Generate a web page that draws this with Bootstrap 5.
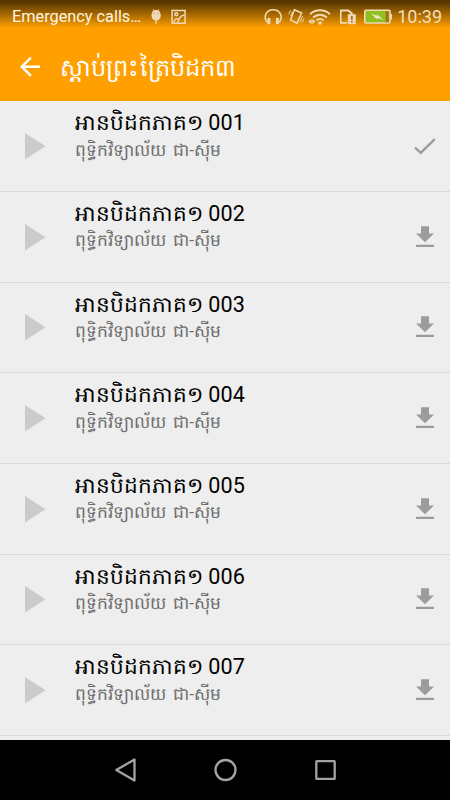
<!DOCTYPE html>
<html lang="km">
<head>
<meta charset="utf-8">
<meta name="viewport" content="width=device-width, initial-scale=1">
<title>ស្ដាប់ព្រះត្រៃបិដក៣</title>
<link href="https://cdn.jsdelivr.net/npm/bootstrap@5.3.0/dist/css/bootstrap.min.css" rel="stylesheet">
<style>
body{font-family:Roboto,sans-serif;background:#eee}
.screen{width:450px;height:800px}
.topbar{height:101px;background:linear-gradient(#543500 0,#5e3b00 3px,#ffa000 28px,#ffa000 100%)}
.status{height:33px;padding-left:12px;font-size:16.3px;color:#fff4e2}
.status .carrier{padding-top:1px}
.status .clock{font-size:18px;color:#f5dfba;margin-left:5px}
.title-row{height:68px;padding-left:19px}
.title-row h1{font-size:24.2px;letter-spacing:.2px;line-height:34px;margin-left:18px;padding-top:1px}
.track{height:90.65px;border-bottom:1px solid #d9d9d9}
.tracks{padding-top:.3px}
.play{margin-left:25px;width:50px;padding-top:1px}
.track-name{font-size:21.6px;line-height:30px;color:#000;margin-top:7.2px}
.artist{font-size:17.1px;line-height:24px;color:#6c6c6c;margin-top:-.7px;word-spacing:3px}
.act{margin-right:12px}
.softkeys{height:60px;background:#000}
svg{display:block;flex:none}
</style>
</head>
<body>
<svg width="0" height="0" class="position-absolute">
<symbol id="play" viewBox="0 0 21 27"><path d="M0 0L20.5 13.3L0 26.5Z" fill="#cbcbcb"/></symbol>
<symbol id="check" viewBox="0 0 26 26"><path d="M3 14.5L8.7 19.9L22.8 6.1" fill="none" stroke="#9b9b9b" stroke-width="2.3"/></symbol>
<symbol id="down" viewBox="0 0 26 26"><path d="M9 2.2h8v7.3h5L13 18.2L4 9.5h5zM4 20.8h18v2.3H4z" fill="#9b9b9b"/></symbol>
</svg>
<div class="screen d-flex flex-column overflow-hidden">
<header class="topbar flex-shrink-0">
<div class="status d-flex align-items-center">
<span class="carrier text-nowrap">Emergency calls…</span>
<svg width="50" height="24" viewBox="141.2 4 50 24" fill="#efd9b4"><path d="M151.7 13.3h9.3c.2 3.7-1.6 6-4 6.2v3.2h-1.4v-3.2c-2.3-.2-4.1-2.5-3.9-6.2zM152 13.4c.2-2.3.9-3.2 1.9-3.8l-1-1.3.6-.4 1.1 1.3c1.1-.4 2.3-.4 3.3 0l1-1.3.6.4-.9 1.3c1.1.6 1.9 1.5 2.1 3.8z"/><path d="M154 12.3h1m3 0h1" stroke="#a77629"/><g fill="none" stroke="#efd9b4" stroke-width="1.5"><path d="M172.3 9.5h13v12.8h-13z"/><circle cx="176.5" cy="13.2" r="1.5"/><path d="M174.2 21.5c.3-3.7 2.2-4.4 4.3-3.3M178 21.5c.7-4.5 3-6.7 6.5-7.5"/></g></svg>
<svg class="ms-auto" width="130" height="24" viewBox="262 4 130 24" fill="none" stroke="#efd9b4" stroke-width="1.6">
<path d="M267.5 21.5c-4-3.5-2.8-12.8 5.7-12.8s9.7 9.3 5.7 12.8"/><path d="M268.9 17v6.2M277.4 17v6.2" stroke-width="3"/>
<path d="M294.4 8.8l7.2 3.2-4.6 10.4-6.4-3.5z" stroke-width="1.5"/><path d="M290.7 15.2l2-4.6M288.7 13.2l1.8-3.9M302.6 15l-2.7 6.3M304 17.5l-1.8 4" stroke-width="1"/>
<path d="M310 13.3c5.5-5.4 14.5-5.4 20 0M313.2 16.5c3.8-3.8 9.8-3.8 13.6 0M316.5 19.5c2-2 5-2 7 0" stroke-width="2"/><circle cx="320" cy="22" r="1.8" fill="#efd9b4" stroke="none"/><path d="M308.2 20.5l3.4-2.8v5.6zM312.3 17.7l3 2.8-3 2.8z" fill="#efd9b4" stroke="none"/>
<path d="M347 21.9h-6.2V9.3"/><path d="M340 9.5h8.5l4 3.8" stroke-width="2.2"/><path d="M347.8 13.2h8v10h-8z" fill="#efd9b4" stroke="none"/><path d="M351.8 15v4M351.8 20v1.5" stroke="#b37312" stroke-width="1.8"/>
<rect x="364.8" y="9.2" width="25.2" height="12.8" rx="1" fill="#8fbf21"/><path d="M387.2 10v11.3" stroke="#a86f15" stroke-width="3"/><path d="M391.3 13v5.5" stroke-width="2"/><path d="M371 12.5l5.6 2.3.7-1.4 6.2 5.7-5.9-2.1-.9 1.3z" fill="#f4e8c6" stroke="none"/>
</svg>
<span class="clock me-2">10:39</span>
</div>
<div class="title-row d-flex align-items-center text-white">
<svg width="23" height="22" viewBox="0 0 23 22" fill="none" stroke="#fff" stroke-width="2.4"><path d="M21 10.7H3M11.9 1.7L2.8 10.7L11.9 19.8"/></svg>
<h1 class="fw-normal mb-0 text-nowrap">ស្ដាប់ព្រះត្រៃបិដក៣</h1>
</div>
</header>
<main class="tracks flex-grow-1 overflow-hidden" id="tracks"></main>
<nav class="softkeys d-flex flex-shrink-0 justify-content-center align-items-center">
<svg width="450" height="60" viewBox="0 740 450 60" fill="none" stroke="#a3a3a3" stroke-width="2.3" stroke-linejoin="round"><path d="M134.5 759.5v21L116.3 770z"/><circle cx="225.5" cy="770" r="10"/><rect x="316.3" y="761.1" width="18.4" height="17.8" rx=".5"/></svg>
</nav>
</div>
<script>
document.getElementById('tracks').innerHTML = [1,2,3,4,5,6,7].map(n => `
<div class="track d-flex">
<div class="play d-flex align-items-center"><svg width="21" height="27"><use href="#play"/></svg></div>
<div class="flex-grow-1 text-nowrap"><div class="track-name">អានបិដកភាគ១ 00${n}</div><div class="artist">ពុទ្ធិកវិទ្យាល័យ ជា-ស៊ីម</div></div>
<div class="act d-flex align-items-center"><svg width="26" height="26"><use href="#${n === 1 ? 'check' : 'down'}"/></svg></div>
</div>`).join('');
</script>
<script src="https://cdn.jsdelivr.net/npm/bootstrap@5.3.0/dist/js/bootstrap.bundle.min.js"></script>
</body>
</html>
